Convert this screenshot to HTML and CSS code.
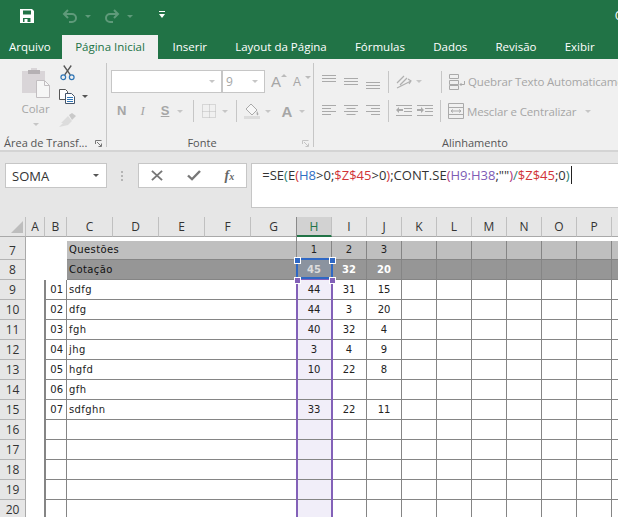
FILE: index.html
```html
<!DOCTYPE html>
<html lang="pt-BR">
<head>
<meta charset="utf-8">
<title>Excel</title>
<link rel="stylesheet" href="styles.css">
</head>
<body>
<header class="titlebar">
  <svg class="qat save" width="16" height="16" viewBox="0 0 16 16"><path fill="#fff" fill-rule="evenodd" d="M1 1h12l2 2v12H1zM4 2.500v4h8v-4zM4 10v4h1.500v-3h3v3h3v-4z"/></svg>
  <svg class="qat undo" width="16" height="16" viewBox="0 0 16 16"><path fill="none" stroke="#5f9a7a" stroke-width="2" d="M6 2 2 6l4 4M2.500 6H10a4 4 0 0 1 0 8H7"/></svg>
  <i class="caret c-undo"></i>
  <svg class="qat redo" width="16" height="16" viewBox="0 0 16 16"><path fill="none" stroke="#5f9a7a" stroke-width="2" d="m10 2 4 4-4 4M13.500 6H6a4 4 0 0 0 0 8h3"/></svg>
  <i class="caret c-redo"></i>
  <svg class="qat more" width="6" height="8" viewBox="0 0 6 8"><path fill="#fff" d="M0 0h6v1H0zM0 3h6L3 7z"/></svg>
  <span class="doc-title">O</span>
</header>
<nav class="tabs">
  <span class="tab first">Arquivo</span>
  <span class="tab active">Página Inicial</span>
  <span class="tab">Inserir</span>
  <span class="tab">Layout da Página</span>
  <span class="tab">Fórmulas</span>
  <span class="tab">Dados</span>
  <span class="tab">Revisão</span>
  <span class="tab">Exibir</span>
</nav>
<section class="ribbon">
  <div class="group clip">
    <div class="group-body clip-body">
      <div class="paste">
        <svg width="28" height="31" viewBox="0 0 28 31"><path fill="#d9d5d8" d="M0 4h9V1h6v3h8v22H0z"/><path fill="#b5b1b4" d="M6 3h12v4H6z"/><path fill="#f6f6f6" stroke="#c2bec1" d="M14.500 13.500h8l5 5v12h-13z"/><path fill="none" stroke="#c2bec1" d="M22.500 13.500v5h5"/></svg>
        <span class="colar">Colar</span>
        <i class="caret grey"></i>
      </div>
      <div class="clip-tools">
        <svg class="cut" width="15" height="16" viewBox="0 0 16 16"><path fill="none" stroke="#555" stroke-width="1.400" d="M4 0l7 10M12 0 5 10"/><circle cx="3.500" cy="12.500" r="2.500" fill="none" stroke="#2f75b5" stroke-width="1.300"/><circle cx="12.500" cy="12.500" r="2.500" fill="none" stroke="#2f75b5" stroke-width="1.300"/></svg>
        <div class="copy-row">
          <svg width="16" height="15" viewBox="0 0 16 15"><path fill="#fff" stroke="#555" d="M.5.500h6l2 2v8H.5z"/><path fill="#fff" stroke="#44546a" d="M6.500 4.500h6l3 3v7h-9z"/><path stroke="#2f75b5" d="M8 8.500h6M8 10.500h6M8 12.500h6"/></svg>
          <i class="caret dark"></i>
        </div>
        <svg class="brush" width="17" height="15" viewBox="0 0 17 15"><path fill="#c9c9c9" d="m10 2 3-2 4 3-3 3-1 1-3-5z"/><path fill="#dcdcdc" d="M9 3l4 5-4 4-9 2 4-4-2 0z"/></svg>
      </div>
    </div>
    <div class="group-label"><span>Área de Transf...</span><svg class="launcher" width="7" height="7" viewBox="0 0 7 7"><path fill="none" stroke="#777" d="M.5 4V.500H6.500M2 2l4 4M3.500 6.500h3v-3"/></svg></div>
  </div>
  <div class="group font">
    <div class="group-body font-body">
      <div class="row">
        <div class="combo name"><i class="caret grey"></i></div>
        <div class="combo size"><span>9</span><i class="caret grey"></i></div>
        <span class="grow">A<i class="tri up"></i></span>
        <span class="grow small">A<i class="tri down"></i></span>
      </div>
      <div class="row row2">
        <b class="fmt n">N</b><em class="fmt i">I</em><span class="fmt s">S</span><i class="caret grey"></i>
        <i class="sep"></i>
        <svg class="border-ic" width="14" height="14" viewBox="0 0 14 14"><path fill="none" stroke="#bdbdbd" stroke-dasharray="1 1" d="M.5.500h13v13H.500zM7.500 .5v13M.5 7.500h13"/></svg><i class="caret grey"></i>
        <i class="sep"></i>
        <svg class="fill-ic" width="16" height="16" viewBox="0 0 16 16"><path fill="#f7f7f7" stroke="#aaa" d="m7 1 6 6-5 5-6-6z"/><path fill="#aaa" d="M13 8c1 2 2 3 1 4s-2-1-1-4z"/><path fill="#dcdcdc" d="M0 13h16v3H0z"/></svg><i class="caret grey"></i>
        <span class="color-a">A</span><i class="caret grey"></i>
      </div>
    </div>
    <div class="group-label"><span>Fonte</span><svg class="launcher" width="7" height="7" viewBox="0 0 7 7"><path fill="none" stroke="#c4c4c4" d="M.5 4V.500H6.500M2 2l4 4M3.500 6.500h3v-3"/></svg></div>
  </div>
  <div class="group align">
    <div class="group-body align-body">
      <div class="row">
        <svg width="14" height="16" viewBox="0 0 14 16"><path class="ln" d="M0 1.500h14M0 4.500h14M0 7.500h14"/></svg>
        <svg width="14" height="16" viewBox="0 0 14 16"><path class="ln" d="M0 4.500h14M0 7.500h14M0 10.500h14"/></svg>
        <svg width="14" height="16" viewBox="0 0 14 16"><path class="ln" d="M0 8.500h14M0 11.500h14M0 14.500h14"/></svg>
        <i class="sep"></i>
        <svg class="orient" width="16" height="16" viewBox="0 0 16 16"><path fill="none" stroke="#b0b0b0" stroke-width="1.200" d="M1 9 8 2M4 11l7-7M1 14 15 7M12 5l3 2-2 3"/></svg><i class="caret grey"></i>
        <i class="sep s2"></i>
        <svg class="wrap-ic" width="16" height="16" viewBox="0 0 16 16"><path fill="none" stroke="#aaa" d="M.5.500h9v4h-9zM.5 6.500h9v4h-9zM.5 11.500h9v4h-9zM15.500 7v3.500H11M12.500 9 11 10.500l1.500 1.500"/></svg>
        <span class="cmd">Quebrar Texto Automaticamente</span>
      </div>
      <div class="row row2">
        <svg width="14" height="12" viewBox="0 0 14 12"><path class="ln" d="M0 .5h14M0 3.500h9M0 6.500h14M0 9.500h9"/></svg>
        <svg width="14" height="12" viewBox="0 0 14 12"><path class="ln" d="M0 .5h14M2.500 3.500h9M0 6.500h14M2.500 9.500h9"/></svg>
        <svg width="14" height="12" viewBox="0 0 14 12"><path class="ln" d="M0 .5h14M5 3.500h9M0 6.500h14M5 9.500h9"/></svg>
        <i class="sep"></i>
        <svg class="indent" width="16" height="12" viewBox="0 0 16 12"><path class="ln" d="M0 .5h16M8 3.500h8M8 6.500h8M0 10.500h16"/><path fill="#aaa" d="M0 5l3-3v2h4v2H3v2z"/></svg>
        <svg class="indent second" width="16" height="12" viewBox="0 0 16 12"><path class="ln" d="M0 .5h16M8 3.500h8M8 6.500h8M0 10.500h16"/><path fill="#aaa" d="M7 5 4 2v2H0v2h4v2z"/></svg>
        <i class="sep s3"></i>
        <svg class="wrap-ic" width="16" height="16" viewBox="0 0 16 16"><path fill="none" stroke="#aaa" d="M.5.500h15v15H.5zM.5 4.500h15M.5 11.500h15M3 8h10M3 8l2-1.500M3 8l2 1.500M13 8l-2-1.500M13 8l-2 1.500"/></svg>
        <span class="cmd">Mesclar e Centralizar</span><i class="caret grey merge"></i>
      </div>
    </div>
    <div class="group-label"><span>Alinhamento</span></div>
  </div>
</section>
<section class="formula-area">
  <div class="namebox"><span>SOMA</span><i class="caret dark"></i></div>
  <div class="dots"><i></i><i></i><i></i></div>
  <div class="fx-box">
    <svg width="12" height="11" viewBox="0 0 13 13" preserveAspectRatio="none"><path fill="none" stroke="#777" stroke-width="2" d="m1 1 11 11M12 1 1 12"/></svg>
    <svg width="14" height="11" viewBox="0 0 14 12" preserveAspectRatio="none"><path fill="none" stroke="#777" stroke-width="2.400" d="m1 6 4 4 8-9"/></svg>
    <span class="fx">f<small>x</small></span>
  </div>
  <div class="formula"><span>=SE<span class="teal">(</span>E<span class="red">(</span><span class="blue">H8</span>&gt;0;<span class="red">$Z$45</span>&gt;0<span class="red">)</span>;CONT.SE<span class="magenta">(</span><span class="purple">H9:H38</span>;""<span class="magenta">)</span><span class="teal">/</span><span class="red">$Z$45</span>;0<span class="teal">)</span></span><i class="cursor"></i></div>
</section>
<main class="sheet">
  <table class="grid">
    <colgroup>
      <col class="w26"><col class="w19"><col class="w22"><col class="w46"><col class="w46"><col class="w46"><col class="w46"><col class="w46"><col class="w35"><col class="w35"><col class="w35"><col class="w35"><col class="w35"><col class="w35"><col class="w35"><col class="w35"><col class="w35"><col class="w35">
    </colgroup>
    <tr class="col-heads"><th class="corner"><i></i></th><th>A</th><th>B</th><th>C</th><th>D</th><th>E</th><th>F</th><th>G</th><th class="cur">H</th><th>I</th><th>J</th><th>K</th><th>L</th><th>M</th><th>N</th><th>O</th><th>P</th><th></th></tr>
    <tr class="gap"><th></th><td colspan="17"></td></tr>
    <tr class="q"><th>7</th><td colspan="2" class="blank"></td><td colspan="5" class="label">Questões</td><td class="num">1</td><td class="num">2</td><td class="num">3</td><td></td><td></td><td></td><td></td><td></td><td></td><td></td></tr>
    <tr class="c"><th>8</th><td colspan="2" class="blank"></td><td colspan="5" class="label">Cotação</td><td class="num sel">45</td><td class="num">32</td><td class="num">20</td><td></td><td></td><td></td><td></td><td></td><td></td><td></td></tr>
    <tr><th>9</th><td class="a"></td><td class="b">01</td><td colspan="5" class="label">sdfg</td><td class="num h">44</td><td class="num">31</td><td class="num">15</td><td></td><td></td><td></td><td></td><td></td><td></td><td></td></tr>
    <tr><th>10</th><td class="a"></td><td class="b">02</td><td colspan="5" class="label">dfg</td><td class="num h">44</td><td class="num">3</td><td class="num">20</td><td></td><td></td><td></td><td></td><td></td><td></td><td></td></tr>
    <tr><th>11</th><td class="a"></td><td class="b">03</td><td colspan="5" class="label">fgh</td><td class="num h">40</td><td class="num">32</td><td class="num">4</td><td></td><td></td><td></td><td></td><td></td><td></td><td></td></tr>
    <tr><th>12</th><td class="a"></td><td class="b">04</td><td colspan="5" class="label">jhg</td><td class="num h">3</td><td class="num">4</td><td class="num">9</td><td></td><td></td><td></td><td></td><td></td><td></td><td></td></tr>
    <tr><th>13</th><td class="a"></td><td class="b">05</td><td colspan="5" class="label">hgfd</td><td class="num h">10</td><td class="num">22</td><td class="num">8</td><td></td><td></td><td></td><td></td><td></td><td></td><td></td></tr>
    <tr><th>14</th><td class="a"></td><td class="b">06</td><td colspan="5" class="label">gfh</td><td class="num h"></td><td class="num"></td><td class="num"></td><td></td><td></td><td></td><td></td><td></td><td></td><td></td></tr>
    <tr><th>15</th><td class="a"></td><td class="b">07</td><td colspan="5" class="label">sdfghn</td><td class="num h">33</td><td class="num">22</td><td class="num">11</td><td></td><td></td><td></td><td></td><td></td><td></td><td></td></tr>
    <tr><th>16</th><td class="a"></td><td class="b"></td><td colspan="5" class="label"></td><td class="num h"></td><td></td><td></td><td></td><td></td><td></td><td></td><td></td><td></td><td></td></tr>
    <tr><th>17</th><td class="a"></td><td class="b"></td><td colspan="5" class="label"></td><td class="num h"></td><td></td><td></td><td></td><td></td><td></td><td></td><td></td><td></td><td></td></tr>
    <tr><th>18</th><td class="a"></td><td class="b"></td><td colspan="5" class="label"></td><td class="num h"></td><td></td><td></td><td></td><td></td><td></td><td></td><td></td><td></td><td></td></tr>
    <tr><th>19</th><td class="a"></td><td class="b"></td><td colspan="5" class="label"></td><td class="num h"></td><td></td><td></td><td></td><td></td><td></td><td></td><td></td><td></td><td></td></tr>
    <tr><th>20</th><td class="a"></td><td class="b"></td><td colspan="5" class="label"></td><td class="num h"></td><td></td><td></td><td></td><td></td><td></td><td></td><td></td><td></td><td></td></tr>
  </table>
  <div class="range-purple"></div>
  <div class="range-blue"></div>
  <i class="hd blue-h tl"></i><i class="hd blue-h tr"></i>
  <i class="hd purple-h bl"></i><i class="hd purple-h br"></i>
  <i class="col-line"></i>
</main>
</body>
</html>
```

FILE: styles.css
```css
* { box-sizing: border-box; }
html, body { margin: 0; height: 517px; overflow: hidden; background: #fff; }
body { width: 618px; font-family: "Open Sans", "Noto Sans", sans-serif; color: #444; }
i { display: block; font-style: normal; }

.titlebar { height: 35px; background: #217346; display: flex; align-items: center; position: relative; overflow: hidden; }
.qat { flex: none; }
.save { margin: -4px 0 0 19px; }
.undo { margin: -4px 0 0 27px; }
.redo { margin: -4px 0 0 13px; }
.more { margin: -5px 0 0 26px; }
.caret { width: 0; height: 0; border: 3px solid transparent; border-top: 3px solid #c6c6c6; border-bottom: 0; flex: none; }
.c-undo, .c-redo { border-top-color: #5f9a7a; margin: -2px 0 0 7px; }
.caret.dark { border-top-color: #555; }
.doc-title { margin-left: auto; margin-right: -6px; color: #fff; font-size: 12px; margin-top: -4px; }

.tabs { height: 24px; background: #217346; display: flex; align-items: center; color: #fff; font-size: 11.500px; }
.tab { padding: 0 14.100px; height: 24px; line-height: 24px; white-space: nowrap; }
.tab.first { padding: 0 11px 0 9px; }
.tab.active { background: #f0f0f0; color: #217346; padding: 0 13.500px; }

.ribbon { height: 93px; background: #f0f0f0; border-bottom: 2px solid #d4d4d4; display: flex; overflow: hidden; }
.group { flex: none; display: flex; flex-direction: column; border-right: 1px solid #c6c6c6; margin-top: 4px; }
.group-body { height: 73px; }
.group-label { height: 11px; font-size: 11px; line-height: 14px; text-align: center; position: relative; color: #555; }
.launcher { position: absolute; right: 4px; top: 4px; }
.clip { width: 107px; height: 84px; }
.clip-body { display: flex; }
.paste { width: 59px; display: flex; flex-direction: column; align-items: center; padding: 4px 0 0 12px; }
.colar { font-size: 11.500px; color: #a6a6a6; line-height: 16px; margin-top: 3px; }
.paste .caret { margin-top: 6px; }
.clip-tools { display: flex; flex-direction: column; align-items: flex-start; padding-top: 2px; }
.cut { margin-left: 1px; }
.copy-row { display: flex; align-items: center; margin-top: 8px; }
.copy-row .caret { margin-left: 7px; }
.brush { margin-top: 9px; }
.group-label span { display: block; }
.clip .group-label { text-align: left; padding-left: 4px; }

.font { width: 207px; height: 84px; padding-left: 4px; }
.font .group-label { padding-right: 20px; }
.row { display: flex; align-items: center; }
.font-body .row:first-child { height: 23px; margin-top: 7px; }
.row2 { margin-top: 7px; height: 22px; }
.combo { height: 23px; background: #fff; border: 1px solid #c6c6c6; display: flex; align-items: center; justify-content: flex-end; padding-right: 6px; font-size: 12px; color: #a6a6a6; }
.combo.name { width: 111px; }
.combo.size { width: 43px; justify-content: space-between; padding-left: 3px; }
.grow { position: relative; margin-left: 6px; font-size: 15px; color: #a6a6a6; width: 17px; font-family: "Liberation Sans", sans-serif; }
.grow.small { font-size: 12px; margin-left: 5px; }
.tri { position: absolute; top: 1px; right: 1px; width: 0; height: 0; border: 3px solid transparent; }
.tri.up { border-top: 0; border-bottom: 3px solid #bbb; }
.tri.down { border-bottom: 0; border-top: 3px solid #bbb; right: -1px; }
.fmt { color: #a6a6a6; font-size: 13px; font-family: "Liberation Sans", sans-serif; line-height: 16px; }
.n { margin-left: 6px; font-weight: 700; }
.i { margin-left: 14px; font-family: "Liberation Serif", serif; }
.s { margin-left: 16px; font-weight: 700; text-decoration: underline; }
.fmt.s + .caret { margin: 0 2px 0 8px; }
.font-body .sep { margin: 0 8px; }
.sep { width: 1px; height: 22px; background: #c6c6c6; flex: none; }
.border-ic + .caret { margin-left: 6px; }
.fill-ic + .caret { margin-left: 5px; }
.fill-ic { margin-left: -1px; }
.color-a { margin-left: 10px; font-size: 15px; font-weight: 700; color: #a6a6a6; font-family: "Liberation Sans", sans-serif; width: 12px; }
.color-a + .caret { margin-left: 6px; }

.align { width: 400px; padding-left: 8px; border-right: 0; height: 84px; }
.align-body .row:first-child { height: 23px; margin-top: 7px; gap: 8px; }
.align-body .row2 { gap: 8px; }
.ln { fill: none; stroke: #aaa; stroke-width: 1; }
.align-body .sep { margin: 0; }
.orient { margin-left: -1px; }
.orient + .caret { margin-left: -4px; }
.align-body .sep.s2 { margin-left: 11px; }
.align-body .sep.s3 { margin-left: -1px; }
.indent { margin-left: -1px; }
.indent.second { margin-left: -3px; }
.wrap-ic { margin-left: -1px; }
.cmd { font-size: 11.500px; letter-spacing: -.15px; color: #a6a6a6; white-space: nowrap; margin-left: -5px; }
.merge { margin-left: 1px; }
.align .group-label { text-align: left; padding-left: 120px; }

.formula-area { height: 65px; background: #e6e6e6; display: flex; align-items: flex-start; padding-top: 11px; }
.namebox { width: 102px; height: 25px; margin-left: 5px; background: #fff; border: 1px solid #c6c6c6; display: flex; align-items: center; justify-content: space-between; padding: 0 7px 0 6px; font-size: 13px; color: #333; }
.dots { width: 31px; height: 25px; display: flex; flex-direction: column; gap: 2px; align-items: center; justify-content: center; }
.dots i { width: 2px; height: 2px; background: #b5b5b5; }
.fx-box { width: 110px; height: 25px; background: #fff; border: 1px solid #c6c6c6; display: flex; align-items: center; justify-content: space-between; padding: 0 12px; }
.fx { font-family: "Liberation Serif", serif; font-style: italic; font-weight: 700; font-size: 14px; color: #666; line-height: 1; }
.fx small { font-size: 10px; }
.formula { width: 368px; height: 45px; margin-left: 4px; background: #fff; border: 1px solid #c6c6c6; border-right: 0; padding: 2px 0 0 10px; font-size: 13px; color: #333; display: flex; align-items: flex-start; white-space: nowrap; }
.cursor { width: 1px; height: 18px; background: #222; margin-left: 1px; }
.teal { color: #2a7f6f; }
.red { color: #d13438; }
.blue { color: #2f6fc4; }
.purple { color: #7d5bb5; }
.magenta { color: #a9357c; }

.sheet { position: relative; }
.grid { border-collapse: separate; border-spacing: 0; table-layout: fixed; width: 647px; font-family: "DejaVu Sans", sans-serif; font-size: 10px; color: #222; }
.w26 { width: 26px; } .w19 { width: 19px; } .w22 { width: 22px; } .w46 { width: 46px; } .w35 { width: 35px; }
.grid tr { height: 20px; }
.grid td { padding: 0; border-right: 1px solid #858585; border-bottom: 1px solid #858585; }
.grid th { padding: 0; font-weight: 400; background: #e6e6e6; border-right: 1px solid #a9a9a9; border-bottom: 1px solid #b4b4b4; font-family: "Open Sans", sans-serif; font-size: 12px; color: #333; }
.col-heads th { background: #e6e6e6; border-right: 1px solid #c0c0c0; border-bottom: 1px solid #a9a9a9; }
.col-heads th.cur { background: #d2d2d2; color: #217346; border-bottom: 2px solid #217346; }
.corner { position: relative; }
.corner i { position: absolute; right: 2px; bottom: 3px; border: 6px solid transparent; border-right-color: #bdbdbd; border-bottom-color: #bdbdbd; }
.grid tr.gap { height: 4px; }
.gap td { border: 0; line-height: 0; font-size: 0; }
.gap th { border-bottom: 0; font-size: 0; line-height: 0; }
.grid tr.q { height: 19px; }
.grid td.blank { background: #fff; border-color: #fff; border-bottom-color: #858585; }
.q td { background: #bfbfbf; padding-bottom: 1px; }
.c td { background: #969696; color: #fff; font-weight: 700; }
.grid .q td.blank, .grid .c td.blank { background: #fff; border-right-color: #fff; border-bottom-color: #fff; }
.c td.label, .q td.label { font-weight: 400; color: #111; }
.label { padding-left: 2px !important; letter-spacing: .4px; }
.num { text-align: center; }
.a { border-bottom: 0 !important; }
.b { text-align: right; padding-right: 3px !important; border-left: 1px solid #858585; }
.h { background: #f1eef9; }
.c td.sel { background: #8b939f; color: #dcdcdc; }

.range-purple { position: absolute; left: 296px; top: 62px; width: 37px; height: 300px; border: 2px solid #8361b8; border-top-width: 1px; }
.range-blue { position: absolute; left: 296px; top: 41px; width: 37px; height: 21px; border: 2px solid #2f68c4; }
.hd { position: absolute; width: 7px; height: 7px; border: 1px solid #fff; }
.blue-h { background: #2f68c4; }
.purple-h { background: #8361b8; }
.tl { left: 294px; top: 40px; }
.tr { left: 329px; top: 40px; }
.bl { left: 294px; top: 60px; }
.br { left: 329px; top: 60px; }
.col-line { position: absolute; left: 296px; top: 0; width: 1px; height: 40px; background: #8a8a8a; }
```
